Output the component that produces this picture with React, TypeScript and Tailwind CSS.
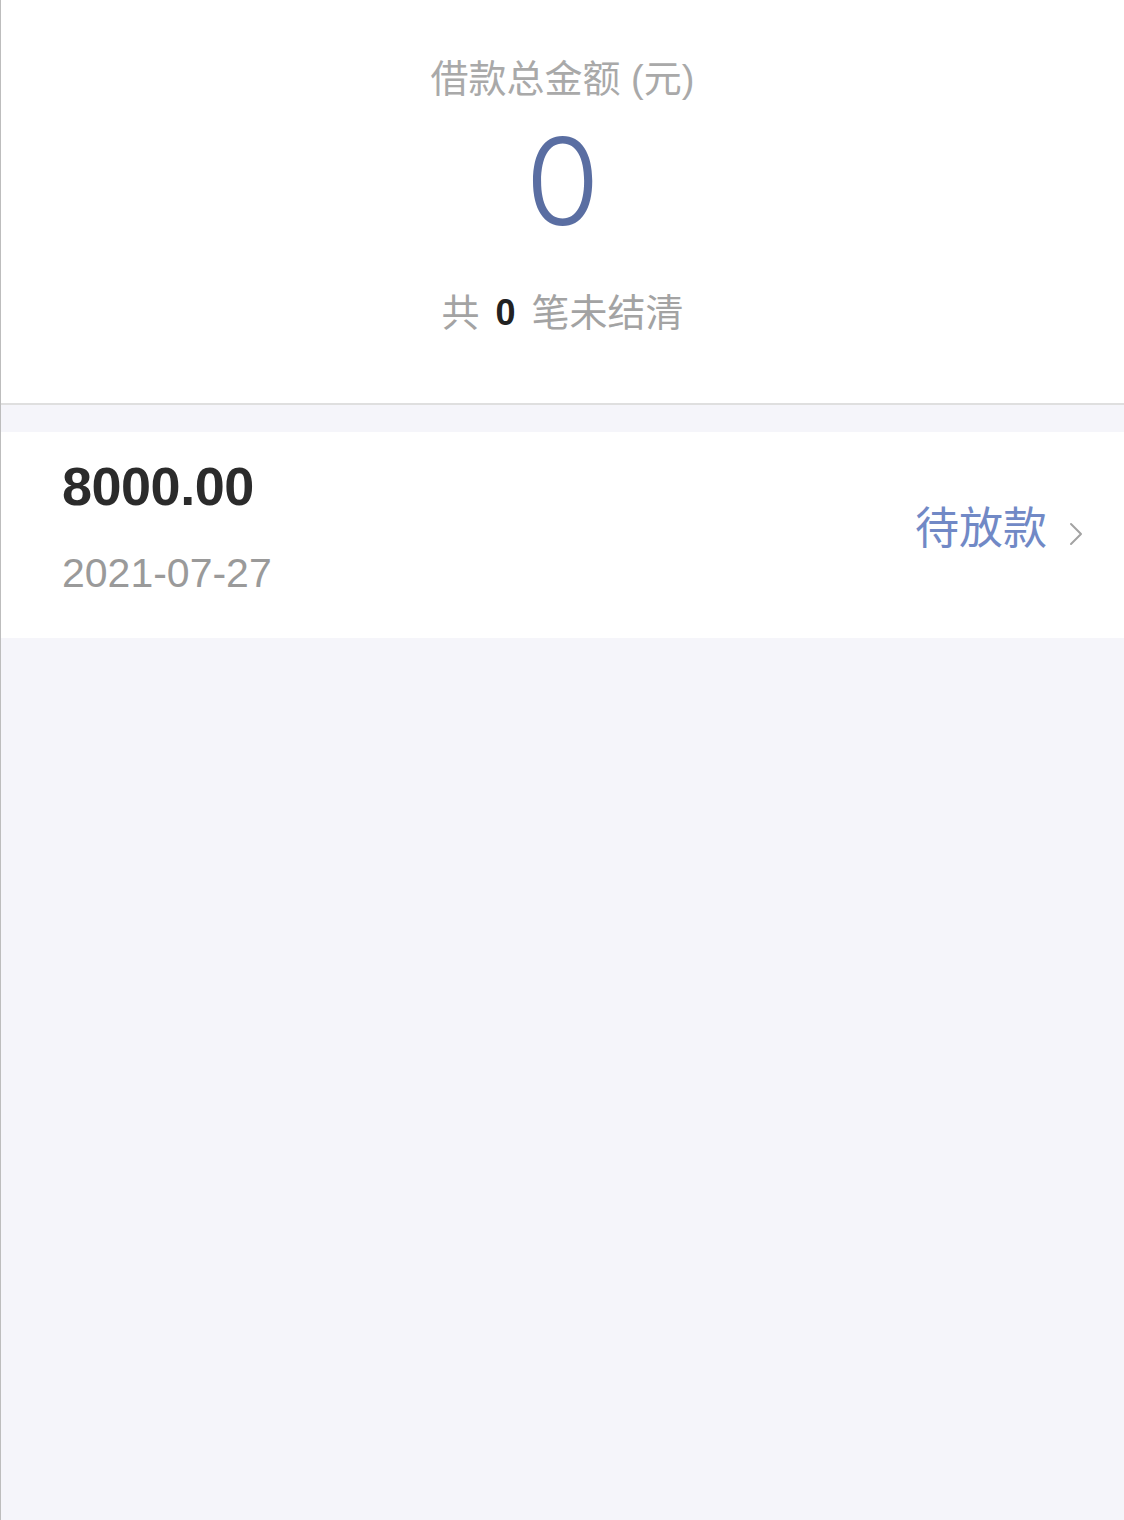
import React from 'react';

const sans = { fontFamily: '"Liberation Sans", "Noto Sans CJK SC", sans-serif' };

export default function App() {
    return (
        <div className="min-h-[1520px] bg-[#f5f5fa] border-l border-[#bdbdbd]" style={sans}>
            {/* summary */}
            <div className="bg-white h-[405px] border-b-2 border-[#dfdfdf] flex flex-col items-center">
                <div className="pt-[56px] text-[38px] leading-[46px] text-[#a9a9a9]">借款总金额 (元)</div>
                <div
                    className="mt-[19px] text-[121px] leading-none font-light text-[#5a6ea2]"
                    style={{ fontFamily: 'Inter, "Liberation Sans", sans-serif' }}
                >
                    0
                </div>
                <div className="mt-[48px] text-[38px] leading-[46px] text-[#a3a3a3] flex items-center">
                    <span>共</span>
                    <span className="mx-[16px] text-[36px] font-bold text-[#222]">0</span>
                    <span>笔未结清</span>
                </div>
            </div>

            {/* loan item */}
            <div className="mt-[27px] bg-white h-[206px] flex justify-between pl-[61px] pr-[41px]">
                <div className="pt-[27px]">
                    <div className="text-[54px] leading-none font-bold tracking-[-0.5px] text-[#2b2b2b]">8000.00</div>
                    <div className="mt-[40px] text-[41px] leading-none text-[#9a9a9a]">2021-07-27</div>
                </div>
                <div className="self-center mb-[12px] flex items-center">
                    <span className="text-[44px] leading-none text-[#7189c6]">待放款</span>
                    <svg className="ml-[22px] mt-[10px]" width="14" height="26" viewBox="0 0 14 26" fill="none">
                        <path d="M2 3 L12 13 L2 23" stroke="#a3a3a3" strokeWidth="2" strokeLinecap="round" strokeLinejoin="round" />
                    </svg>
                </div>
            </div>
        </div>
    );
}
